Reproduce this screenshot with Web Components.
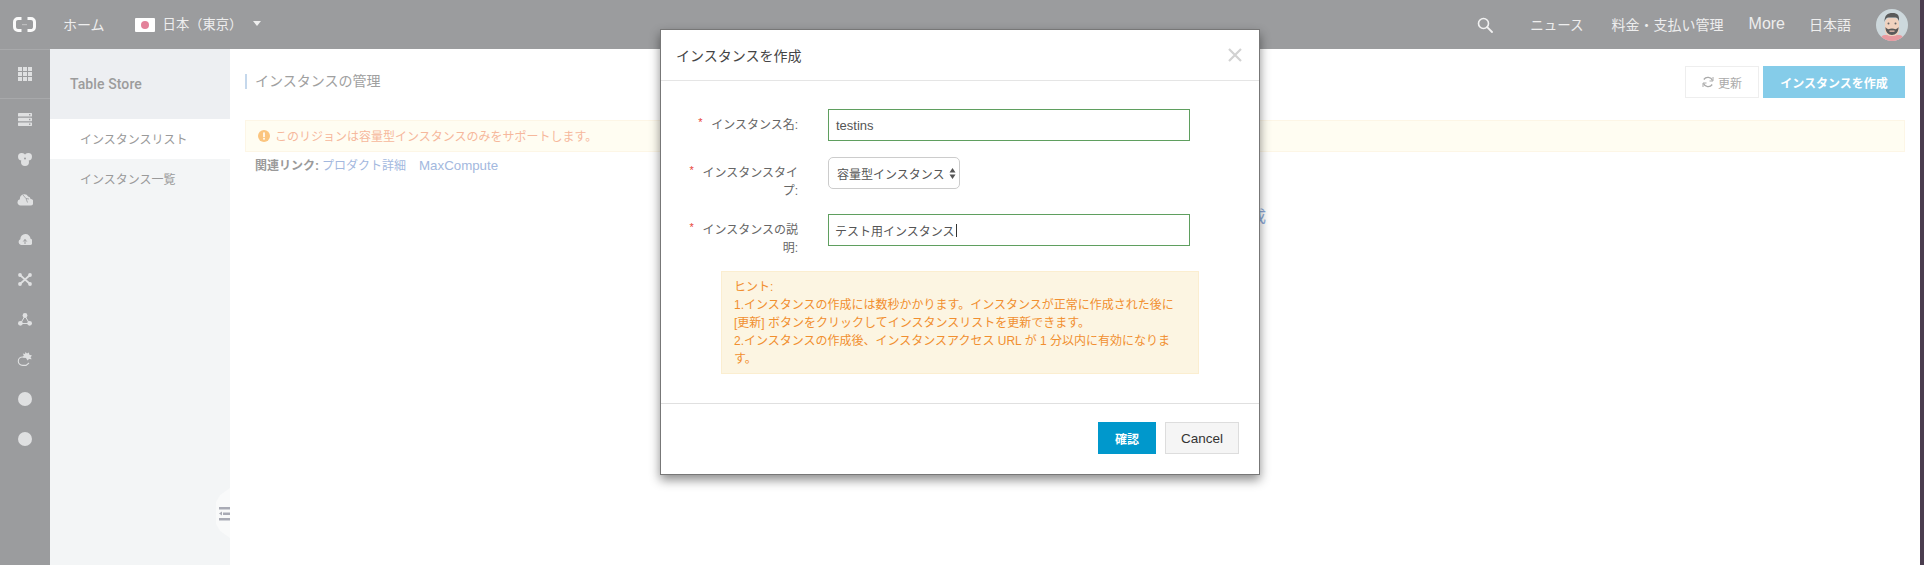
<!DOCTYPE html>
<html lang="ja"><head><meta charset="utf-8">
<style>
html,body{margin:0;padding:0;height:565px;overflow:hidden;background:#4b3d4f}
body{font-family:"Liberation Sans","Noto Sans CJK JP",sans-serif;font-size:12px;display:flex;width:1924px}
</style></head><body>
<app-shell>
  <top-bar slot="top"></top-bar>
  <side-rail slot="rail"></side-rail>
  <side-nav slot="nav"></side-nav>
  <main-panel slot="main"></main-panel>
</app-shell>
<create-dialog></create-dialog>
<script>
function def(name,html){customElements.define(name,class extends HTMLElement{
  connectedCallback(){if(this._d)return;this._d=1;this.attachShadow({mode:'open'}).innerHTML=typeof html==='function'?html(this):html;}
});}

def('app-shell',`<style>
:host{display:flex;flex-direction:column;width:1920px;height:565px;flex:none}
.row{display:flex;flex:1;min-height:0}
</style><slot name="top"></slot><div class="row"><slot name="rail"></slot><slot name="nav"></slot><slot name="main"></slot></div>`);

def('top-bar',`<style>
:host{display:flex;align-items:center;height:49px;background:#9b9c9e;color:#eeeeee;font-size:14px;padding:0 12px 0 13px;box-sizing:border-box;flex:none}
.tx{margin-bottom:2px}
.logo{margin-right:27px;display:block}
.flag{width:20px;height:14px;background:#fff;border-radius:1px;display:flex;align-items:center;justify-content:center;margin:0 8px 0 30px}
.flag i{width:8px;height:8px;border-radius:50%;background:#e3829a;display:block}
.region{font-size:13.3px}
.caret{width:0;height:0;border:4.500px solid transparent;border-top:5px solid #eee;border-bottom:0;margin:0 0 2px 11px}
.right{margin-left:auto;display:flex;align-items:center}
.more{font-size:16px}
.s{display:block;margin-right:37px}
.n{margin-right:28px}
.av{display:block;margin-left:25px}
</style>
<svg class="logo" width="23" height="15" viewBox="0 0 23 15"><path d="M8.500 1.500H5A3.500 3.500 0 0 0 1.500 5v5A3.500 3.500 0 0 0 5 13.500h3.500M14.500 1.500H18A3.500 3.500 0 0 1 21.500 5v5a3.500 3.500 0 0 1-3.500 3.500h-3.500" fill="none" stroke="#fafafa" stroke-width="3"/><rect x="9" y="7" width="5" height="1.200" fill="#bcbdbe"/></svg>
<span class="tx">ホーム</span>
<span class="flag"><i></i></span><span class="region tx">日本（東京）</span><span class="caret"></span>
<div class="right">
<svg class="s" width="16" height="16" viewBox="0 0 16 16"><circle cx="6.500" cy="6.500" r="5" fill="none" stroke="#f2f2f2" stroke-width="1.600"/><path d="M10.200 10.200 15 15" stroke="#f2f2f2" stroke-width="1.800" stroke-linecap="round"/></svg>
<span class="n tx" style="font-size:13.5px">ニュース</span><span class="n tx" style="margin-right:25px">料金・支払い管理</span><span class="more tx" style="margin-right:24px">More</span><span class="tx">日本語</span>
<svg class="av" width="32" height="32" viewBox="0 0 32 32"><defs><clipPath id="c"><circle cx="16" cy="16" r="16"/></clipPath></defs><g clip-path="url(#c)"><rect width="32" height="32" fill="#cdd8dc"/><rect x="5" y="26" width="22" height="8" rx="4" fill="#e99aa0"/><rect x="9" y="9" width="14" height="18" rx="5" fill="#f0d2bf"/><path d="M8.500 13c0-7 3-9 8-9s7 2 6.500 8c-1-2.500-2-3.500-3.500-3.500h-7c-2 0-3.500 2-4 4.500z" fill="#5a5a5a"/><path d="M9.500 18c1 1.500 2 2 3 2.300 2-1 5-1 7 0 1-.3 2-.8 3-2.300.3 5-3 8-6.500 8s-6.800-3-6.500-8z" fill="#5a5a5a"/><rect x="13.500" y="21.500" width="5" height="1.300" fill="#e9bfb0"/><circle cx="12.500" cy="14.500" r="1" fill="#666"/><circle cx="19.500" cy="14.500" r="1" fill="#666"/></g></svg>
</div>`);

const ICONS={
 grid:`<svg width="14" height="14" viewBox="0 0 14 14" fill="#dfe0e1"><rect width="4" height="4"/><rect x="5" width="4" height="4"/><rect x="10" width="4" height="4"/><rect y="5" width="4" height="4"/><rect x="5" y="5" width="4" height="4"/><rect x="10" y="5" width="4" height="4"/><rect y="10" width="4" height="4"/><rect x="5" y="10" width="4" height="4"/><rect x="10" y="10" width="4" height="4"/></svg>`,
 server:`<svg width="14" height="13" viewBox="0 0 14 13" fill="#dfe0e1"><rect width="14" height="3.500" rx=".6"/><rect y="4.700" width="14" height="3.500" rx=".6"/><rect y="9.400" width="14" height="3.500" rx=".6"/><g fill="#9b9c9e"><rect x="11" y="1" width="1.400" height="1.400"/><rect x="11" y="5.800" width="1.400" height="1.400"/><rect x="11" y="10.500" width="1.400" height="1.400"/></g></svg>`,
 flower:`<svg width="14" height="13" viewBox="0 0 14 13" fill="#dfe0e1"><circle cx="3.700" cy="3.700" r="3.700"/><circle cx="10.300" cy="3.700" r="3.700"/><circle cx="7" cy="9" r="4"/><circle cx="7" cy="5.500" r="1" fill="#9b9c9e"/></svg>`,
 cloud:`<svg width="16" height="14" viewBox="0 0 16 14" fill="#dfe0e1"><path d="M3.500 13.500a3.200 3.200 0 0 1-.6-6.300 4.500 4.500 0 0 1 4.200-5 4 4 0 0 1 4 2.300 3.200 3.200 0 0 1 2.500 2.600 3.200 3.200 0 0 1-.6 6.400z"/><path d="M6 3l3 3.500 1.500 4M9 6.500l3 .5" stroke="#9b9c9e" stroke-width=".8" fill="none"/></svg>`,
 upload:`<svg width="14" height="11" viewBox="0 0 14 11" fill="#dfe0e1"><path d="M3 11a3 3 0 0 1-.6-5.700A5 5 0 0 1 7.500 0a5 5 0 0 1 5 4.800A3.200 3.200 0 0 1 11 11z"/><path d="M7 10V5.500M5.300 7.500 7 5.500l1.700 2" stroke="#9b9c9e" stroke-width="1" fill="none"/></svg>`,
 cross:`<svg width="14" height="13" viewBox="0 0 14 13" fill="#dfe0e1"><path d="M2 2l10 9M12 2 2 11" stroke="#dfe0e1" stroke-width="1.700"/><circle cx="2" cy="2" r="1.900"/><circle cx="12" cy="2" r="1.900"/><circle cx="2" cy="11" r="1.900"/><circle cx="12" cy="11" r="1.900"/></svg>`,
 tri:`<svg width="14" height="13" viewBox="0 0 14 13" fill="#dfe0e1"><path d="M7 3 2.500 10.500h9z" fill="none" stroke="#dfe0e1" stroke-width="1"/><circle cx="7" cy="2.500" r="2.400"/><circle cx="2.400" cy="10.300" r="2.400"/><circle cx="11.600" cy="10.300" r="2.400"/></svg>`,
 mouse:`<svg width="16" height="14" viewBox="0 0 16 14"><path d="M8 5H5.500a4.200 4.200 0 1 0 0 8.400H9l3-2.400" fill="none" stroke="#dfe0e1" stroke-width="1.100"/><path d="M8.500 0l1.500 1.500 1.800-1 .6 2.200 2.600.8-1.500 1.700 1.200 2-2.700-.2-1.500 1.400L9 6 5.500 5.500l1.300-2L5.800 1.500l2.200.4z" fill="#dfe0e1"/></svg>`,
 dot:`<svg width="14" height="14" viewBox="0 0 14 14"><circle cx="7" cy="7" r="7" fill="#dfe0e1"/></svg>`
};
def('rail-icon',h=>`<style>:host{display:flex;align-items:center;justify-content:center;height:40px;flex:none}svg{display:block}</style>${ICONS[h.getAttribute('name')]||''}`);

def('side-rail',`<style>
:host{display:block;width:50px;height:516px;background:#9b9c9e;flex:none}
.first{height:48px;border-top:1px solid #a8a9ab;border-bottom:1px solid #a8a9ab;display:flex;align-items:center;justify-content:center}
.first rail-icon{height:auto}
</style>
<div class="first"><rail-icon name="grid"></rail-icon></div>
<rail-icon name="server"></rail-icon><rail-icon name="flower"></rail-icon><rail-icon name="cloud"></rail-icon><rail-icon name="upload"></rail-icon><rail-icon name="cross"></rail-icon><rail-icon name="tri"></rail-icon><rail-icon name="mouse"></rail-icon><rail-icon name="dot"></rail-icon><rail-icon name="dot"></rail-icon>`);

def('side-nav',`<style>
:host{display:block;position:relative;width:180px;height:516px;background:#f3f5f6;color:#999;flex:none}
.h{height:70px;background:#edeff2;padding-left:20px;display:flex;align-items:center;font:500 14px Roboto,"Noto Sans CJK JP",sans-serif;letter-spacing:.1px;color:#9c9c9c;box-sizing:border-box}
.i{height:40px;padding:0 0 2px 30px;box-sizing:border-box;display:flex;align-items:center;font-size:12px;color:#9a9a9a}
.on{background:#fff}
.grip{position:absolute;right:0;top:439px;width:14px;height:50px;background:#f9fafa;clip-path:polygon(100% 0,100% 100%,30% 86%,0 72%,0 28%,30% 14%);display:block}
.lines{position:absolute;right:0;top:458px;display:block}
</style>
<div class="h">Table Store</div>
<div class="i on">インスタンスリスト</div>
<div class="i">インスタンス一覧</div>
<span class="grip"></span>
<svg class="lines" width="11" height="14" viewBox="0 0 11 14" fill="#a9abb5"><rect width="11" height="2.500"/><rect x="4" y="5.500" width="7" height="2.500"/><path d="M3 4.500v4l-3-2z"/><rect y="11" width="11" height="2.500"/></svg>`);

def('main-panel',`<style>
:host{display:block;flex:1;min-width:0;background:#fff;padding:17px 15px 0;box-sizing:border-box;color:#999;font-size:12px}
.head{display:flex;align-items:center;height:32px}
.title{border-left:2px solid #c5d8ec;padding-left:8px;height:15px;line-height:14px;font-size:14px;color:#a0a0a0;margin-bottom:1px}
.btns{margin-left:auto;display:flex;gap:4px}
.b{height:32px;box-sizing:border-box;display:flex;align-items:center;justify-content:center}
.ref{width:74px;border:1px solid #eeeeee;color:#aaa;gap:4px;background:#fff}
.cr{width:142px;background:#85cce9;color:#fff;font-weight:700}
.note{margin-top:22px;height:32px;box-sizing:border-box;border:1px solid #fdf6e6;background:#fffdf2;display:flex;align-items:center;padding:0 0 1px 12px;gap:5px;color:#f6b89c}
.links{margin-top:5px;height:18px;line-height:18px;padding-left:10px;display:flex;align-items:center}
.links b{color:#9a9a9a;margin-right:3px}
.links a{color:#a3b8de}
.links .mc{font-size:13.300px;margin-left:13px}
.empty{margin-top:33px;height:18px;line-height:18px;text-align:right;padding-right:639px;font-size:16px;color:#8aa8d8}
svg{display:block}
</style>
<div class="head"><div class="title">インスタンスの管理</div>
<div class="btns"><div class="b ref"><svg width="12" height="12" viewBox="0 0 12 12" fill="none" stroke="#aaa" stroke-width="1.300"><path d="M10.500 4.500A5 5 0 0 0 1.800 3.500M1.500 7.500a5 5 0 0 0 8.700 1"/><path d="M11 1v4H7.500M1 11V7h3.500" stroke-width="1"/></svg><span>更新</span></div><div class="b cr">インスタンスを作成</div></div></div>
<div class="note"><svg width="12" height="12" viewBox="0 0 12 12"><circle cx="6" cy="6" r="6" fill="#fbc57f"/><rect x="5.200" y="2.400" width="1.600" height="4.800" fill="#fff"/><rect x="5.200" y="8" width="1.600" height="1.600" fill="#fff"/></svg><span>このリジョンは容量型インスタンスのみをサポートします。</span></div>
<div class="links"><b>関連リンク:</b><a>プロダクト詳細</a><a class="mc">MaxCompute</a></div>
<div class="empty">インスタンスを作成</div>`);

def('form-row',h=>`<style>
:host{display:flex;align-items:flex-start}
.l{width:113px;margin-left:24px;padding-top:7px;line-height:18px;text-align:right;color:#666;font-size:12px;flex:none;box-sizing:border-box}
.st{color:#e8443a;display:inline-block;width:13px;text-align:left;font-size:11px;line-height:12px;vertical-align:3px}
.f{margin-left:30px}
</style><div class="l"><span class="st">*</span>${h.getAttribute('label')}</div><div class="f"><slot></slot></div>`);

def('text-box',`<style>
:host{display:flex;align-items:center;width:362px;height:32px;box-sizing:border-box;border:1px solid #5f9f5f;padding-left:6px;color:#555;font-size:12px;background:#fff}
</style><slot></slot>`);

def('select-box',`<style>
:host{display:flex;align-items:center;width:132px;height:32px;box-sizing:border-box;border:1px solid #ccc;border-radius:5px;padding-left:8px;color:#555;font-size:12px;background:#fff}
svg{margin-left:4px;display:block;flex:none}
</style><slot></slot><svg width="7" height="11" viewBox="0 0 7 11" fill="#555"><path d="M3.500 0 6.500 4.500H.5zM3.500 11 .5 6.500h6z"/></svg>`);

def('hint-box',`<style>
:host{display:block;box-sizing:border-box;width:478px;margin-left:60px;height:103px;background:#fcf5e2;border:1px solid #fbeed0;padding:6px 12px 0;line-height:18px;color:#f18f2f;font-size:12px}
</style><slot></slot>`);

def('create-dialog',`<style>
:host{position:absolute;left:660px;top:29px;width:600px;box-sizing:border-box;background:#fff;border:1px solid #777;box-shadow:0 5px 10px rgba(0,0,0,.45);display:block;color:#444}
.hd{height:50px;border-bottom:1px solid #e5e5e5;display:flex;align-items:center;padding:0 15px;font-size:14px;color:#444}
.x{margin-left:auto;display:block;margin-right:2px}
.bd{padding-top:28px;height:322px;box-sizing:border-box}
.ft{border-top:1px solid #e0e0e0;padding:18px 20px 20px;display:flex;justify-content:flex-end;gap:9px}
.ok,.cancel{height:32px;box-sizing:border-box;display:flex;align-items:center;justify-content:center}
.ok{width:58px;background:#0098cc;color:#fff;font-weight:700;font-size:12px}
.cancel{width:74px;background:#f5f5f5;border:1px solid #dddddd;color:#333;font-size:13.500px}
.cr{display:inline-block;width:1px;height:13px;background:#333;margin-left:1px}
.t{font-size:13px;margin-left:1px}
</style>
<div class="hd"><span>インスタンスを作成</span><svg class="x" width="14" height="14" viewBox="0 0 14 14"><path d="M1 1l12 12M13 1 1 13" stroke="#d2d2d2" stroke-width="2.200"/></svg></div>
<div class="bd">
<form-row label="インスタンス名:" style="margin-bottom:16px"><text-box><span class="t">testins</span></text-box></form-row>
<form-row label="インスタンスタイプ:" style="margin-bottom:14px"><select-box>容量型インスタンス</select-box></form-row>
<form-row label="インスタンスの説明:" style="margin-bottom:14px"><text-box><span>テスト用インスタンス</span><span class="cr"></span></text-box></form-row>
<hint-box>ヒント:<br>1.インスタンスの作成には数秒かかります。インスタンスが正常に作成された後に<br>[更新] ボタンをクリックしてインスタンスリストを更新できます。<br>2.インスタンスの作成後、インスタンスアクセス URL が 1 分以内に有効になりま<br>す。</hint-box>
</div>
<div class="ft"><div class="ok">確認</div><div class="cancel">Cancel</div></div>`);
</script>
</body></html>
